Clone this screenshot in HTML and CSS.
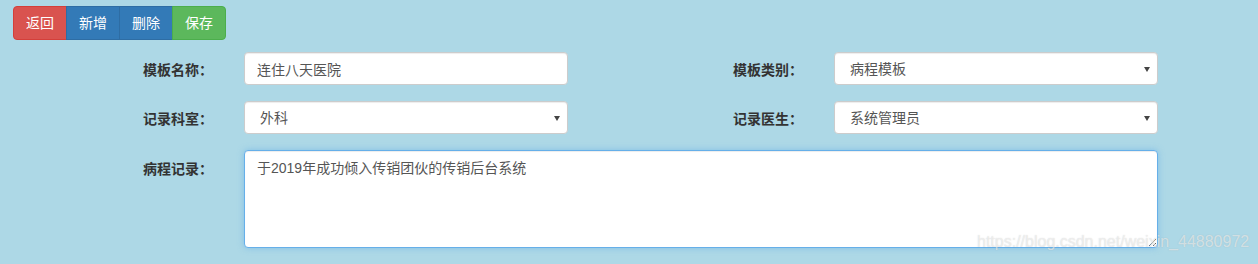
FILE: index.html
```html
<!DOCTYPE html>
<html lang="zh-CN">
<head>
<meta charset="utf-8">
<title>病程模板</title>
<link rel="stylesheet" href="styles.css">
</head>
<body>
<div class="toolbar">
  <div class="btn-group">
    <button class="btn btn-danger">返回</button>
    <button class="btn btn-primary">新增</button>
    <button class="btn btn-primary">删除</button>
    <button class="btn btn-success">保存</button>
  </div>
</div>
<form class="form-grid">
  <label class="lbl">模板名称：</label>
  <input class="form-control" type="text" value="连住八天医院">
  <span></span>
  <label class="lbl">模板类别：</label>
  <div class="select-wrap"><select class="form-control select"><option>病程模板</option></select></div>

  <label class="lbl">记录科室：</label>
  <div class="select-wrap"><select class="form-control select"><option>外科</option></select></div>
  <span></span>
  <label class="lbl">记录医生：</label>
  <div class="select-wrap"><select class="form-control select"><option>系统管理员</option></select></div>

  <label class="lbl lbl-top">病程记录：</label>
  <textarea class="form-control area focused">于2019年成功倾入传销团伙的传销后台系统</textarea>
</form>
<div class="watermark">https://blog.csdn.net/weixin_44880972</div>
</body>
</html>
```

FILE: styles.css
```css
* { box-sizing: border-box; }
html, body { margin: 0; padding: 0; }
body {
  background: #add8e6;
  font-family: "Liberation Sans", "Noto Sans CJK SC", sans-serif;
  font-size: 14px;
  color: #333;
  width: 1258px;
  height: 264px;
  overflow: hidden;
  position: relative;
}
.toolbar { padding: 6px 0 0 13px; height: 40px; }
.btn-group { display: inline-flex; }
.btn {
  font-family: inherit;
  font-size: 14px;
  line-height: 20px;
  padding: 6px 12px;
  height: 34px;
  border: 1px solid transparent;
  color: #fff;
  margin: 0;
  border-radius: 0;
}
.btn + .btn { margin-left: -1px; }
.btn:first-child { border-radius: 4px 0 0 4px; }
.btn:last-child { border-radius: 0 4px 4px 0; }
.btn-danger { background: #d9534f; border-color: #d43f3a; }
.btn-primary { background: #337ab7; border-color: #2e6da4; }
.btn-success { background: #5cb85c; border-color: #4cae4c; }

.form-grid {
  margin: 12px 0 0 143px;
  display: grid;
  grid-template-columns: 101px 324px 165px 101px 324px;
  grid-auto-rows: auto;
  row-gap: 16px;
  align-items: center;
}
.lbl { font-weight: bold; color: #333; font-size: 14px; }
.lbl-top { align-self: start; padding-top: 8px; }
.form-control {
  display: block;
  width: 100%;
  height: 33px;
  padding: 6px 12px;
  font-family: inherit;
  font-size: 14px;
  line-height: 20px;
  color: #555;
  background: #fff;
  border: 1px solid #ccc;
  border-radius: 4px;
  box-shadow: inset 0 1px 1px rgba(0,0,0,.075);
  margin: 0;
}
.select-wrap { position: relative; }
.select {
  appearance: none;
  -webkit-appearance: none;
  padding-left: 15px;
}
.select-wrap::after {
  content: "";
  position: absolute;
  right: 8px;
  top: 15px;
  border-left: 3px solid transparent;
  border-right: 3px solid transparent;
  border-top: 5px solid #444;
}
.area {
  grid-column: 2 / 6;
  height: 98px;
  resize: vertical;
  padding: 7px 12px;
}
.focused {
  border-color: #66afe9;
  box-shadow: inset 0 1px 1px rgba(0,0,0,.075), 0 0 6px rgba(102,175,233,.6);
  outline: 0;
}
.watermark {
  position: absolute;
  left: 977px;
  top: 233px;
  font-family: "Liberation Sans", sans-serif;
  font-size: 16px;
  color: rgba(255,255,255,.55);
  text-shadow: 0 0 1px rgba(120,120,120,.35);
  white-space: nowrap;
}
```
